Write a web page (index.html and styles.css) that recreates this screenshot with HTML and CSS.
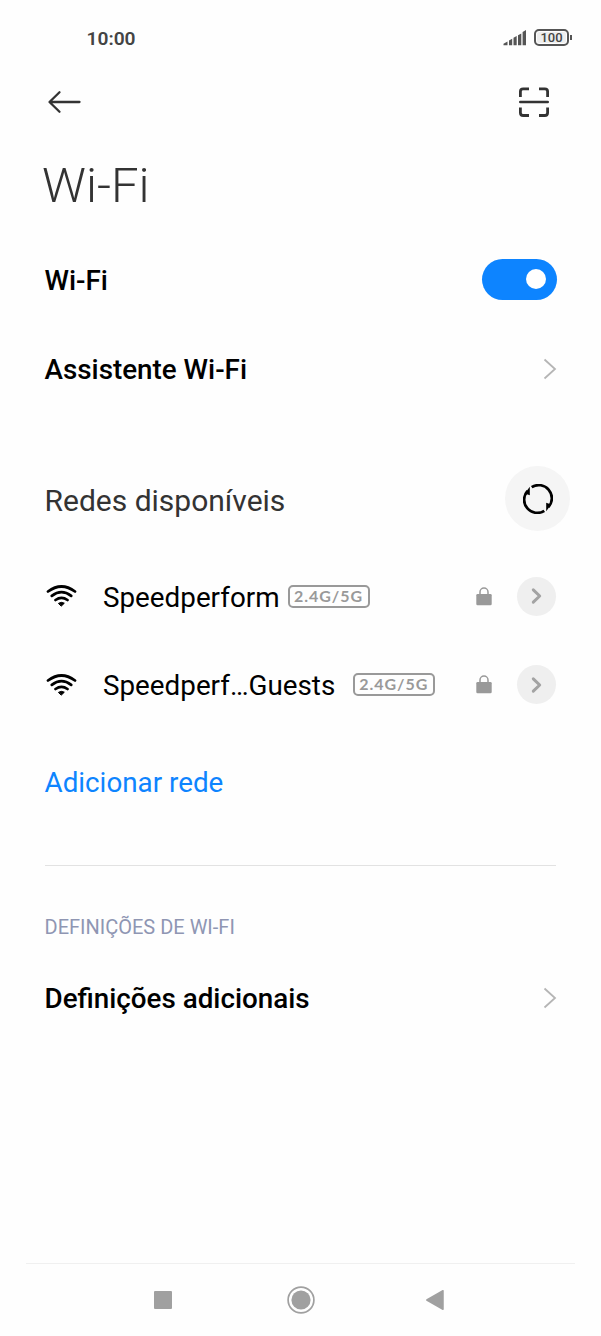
FILE: index.html
```html
<!DOCTYPE html>
<html lang="pt">
<head>
<meta charset="utf-8">
<title>Wi-Fi</title>
<link rel="stylesheet" href="styles.css">
</head>
<body>
<div class="screen">
  <header class="status">
    <span class="clock">10:00</span>
    <div class="indicators">
      <svg class="signal" width="24" height="17" viewBox="0 0 24 17" fill="#555"><path d="M0.5 16.3v-1.600l4-2.200v3.800zM6 16.300v-4.900l3.200-1.700v6.600zM10.500 16.300V8.800l3.200-1.700v9.200zM15 16.300V6.200l3.300-1.800v11.900zM19.600 16.300V3.100L23 .9v15.400z"/></svg>
      <span class="battery">100</span>
    </div>
  </header>
  <div class="appbar">
    <svg width="34" height="24" viewBox="0 0 34 24" fill="none" stroke="#333" stroke-width="2.3" stroke-linecap="round" stroke-linejoin="round"><path d="M32.500 12H2.800M12.500 2.200L2.500 12l10 9.800"/></svg>
    <svg width="32" height="32" viewBox="0 0 32 32" fill="none" stroke="#333" stroke-width="2.800"><path d="M2.400 11V5.600Q2.400 2.800 5.200 2.800H11M21 2.800h5.800q2.800 0 2.800 2.800V11M29.600 21.500v5.200q0 2.800-2.800 2.800H21M11 29.500H5.200q-2.800 0-2.800-2.800v-5.200"/><path d="M2.300 16h27.400" stroke-linecap="round" stroke-width="2.600"/></svg>
  </div>
  <h1 class="title">Wi-Fi</h1>
  <div class="row">
    <span class="strong">Wi-Fi</span>
    <span class="toggle"><span class="knob"></span></span>
  </div>
  <div class="row">
    <span class="strong">Assistente Wi-Fi</span>
    <svg class="chevron" width="14" height="22" viewBox="0 0 14 22"><path d="M1.500 1.500L12 11 1.500 20.500"/></svg>
  </div>
  <div class="row section">
    <span class="heading">Redes disponíveis</span>
    <span class="refresh">
      <svg width="30" height="30" viewBox="0 0 30 30"><path d="M8.700 3.200A13.100 13.100 0 0 1 25.500 23M21.300 26.800A13.100 13.100 0 0 1 4.500 7" fill="none" stroke="#000" stroke-width="2.700"/><path d="M6.800 2.800V11.300L1.800 9.500zM23.200 27.200V18.700l5 1.800z"/></svg>
    </span>
  </div>
  <div class="row network">
    <svg class="wifi" width="32" height="24" viewBox="0 0 32 24"><path d="M3 7.500Q16.500-2.500 30 7.500M6.800 11.900q9.700-7.500 19.400 0M10.500 16q6-4.200 12 0"/><path class="dot" d="M13.700 19.200q2.800-1.800 5.600 0l-2.800 2.700z"/></svg>
    <span class="name">Speedperform</span>
    <span class="band">2.4G/5G</span>
    <svg class="lock" width="16" height="19" viewBox="0 0 16 19"><path d="M4 8V5a4 4 0 0 1 8 0v3" fill="none" stroke="#999" stroke-width="1.500"/><rect x=".3" y="7" width="15.400" height="11.300" rx="1.300" fill="#999"/></svg>
    <span class="more"><svg width="12" height="18" viewBox="0 0 12 18"><path d="M3.300 2.800L9.700 9l-6.400 6.200"/></svg></span>
  </div>
  <div class="row network">
    <svg class="wifi" width="32" height="24" viewBox="0 0 32 24"><path d="M3 7.500Q16.500-2.500 30 7.500M6.800 11.900q9.700-7.500 19.400 0M10.500 16q6-4.200 12 0"/><path class="dot" d="M13.700 19.200q2.800-1.800 5.600 0l-2.800 2.700z"/></svg>
    <span class="name">Speedperf…Guests</span>
    <span class="band spaced">2.4G/5G</span>
    <svg class="lock" width="16" height="19" viewBox="0 0 16 19"><path d="M4 8V5a4 4 0 0 1 8 0v3" fill="none" stroke="#999" stroke-width="1.500"/><rect x=".3" y="7" width="15.400" height="11.300" rx="1.300" fill="#999"/></svg>
    <span class="more"><svg width="12" height="18" viewBox="0 0 12 18"><path d="M3.300 2.800L9.700 9l-6.400 6.200"/></svg></span>
  </div>
  <div class="row add">Adicionar rede</div>
  <div class="divider"></div>
  <h2 class="label">DEFINIÇÕES DE WI-FI</h2>
  <div class="row last">
    <span class="strong">Definições adicionais</span>
    <svg class="chevron" width="14" height="22" viewBox="0 0 14 22"><path d="M1.500 1.500L12 11 1.500 20.500"/></svg>
  </div>
  <nav class="navbar">
    <svg width="20" height="20" viewBox="0 0 20 20"><rect x="1" y="1" width="18" height="18" rx="1" fill="#a0a0a0"/></svg>
    <svg width="28" height="28" viewBox="0 0 28 28"><circle cx="14" cy="14" r="12.900" fill="none" stroke="#a0a0a0" stroke-width="1.700"/><circle cx="14" cy="14" r="9.600" fill="#a0a0a0"/></svg>
    <svg width="20" height="22" viewBox="0 0 20 22"><path d="M1.800 11L18 1.700v18.600z" fill="#a0a0a0" stroke="#a0a0a0" stroke-width="1.500" stroke-linejoin="round"/></svg>
  </nav>
</div>
</body>
</html>
```
FILE: styles.css
```css
* { box-sizing: border-box; }
body { margin: 0; background: #fefefe; font-family: Roboto, sans-serif; color: #000; }
svg { display: block; flex: none; }
.screen { width: 601px; height: 1336px; display: flex; flex-direction: column; overflow: hidden; }
.status { height: 75px; padding: 0 29px 0 86.5px; display: flex; align-items: center; justify-content: space-between; }
.clock { font-size: 19.2px; font-weight: 600; color: #444; padding-top: 1px; }
.indicators { display: flex; align-items: center; gap: 7px; }
.battery { position: relative; width: 35px; height: 17px; margin-right: 3px; border: 2px solid #555; border-radius: 5px; background: #eee; box-shadow: inset 0 0 0 1px #fefefe; font-size: 13px; line-height: 14px; font-weight: 500; text-align: center; color: #444; }
.battery::after { content: ""; position: absolute; right: -5px; top: 4px; width: 2px; height: 5px; background: #555; }
.appbar { height: 54px; padding: 0 51px 0 47px; display: flex; align-items: center; justify-content: space-between; }
.title { height: 106px; margin: 0; padding: 28px 0 0 42px; font-size: 49px; line-height: 58px; font-weight: 300; color: #333; }
.row { height: 89px; padding: 0 44.5px; display: flex; align-items: center; justify-content: space-between; flex: none; font-size: 27.8px; }
.strong { font-weight: 500; padding-top: 2px; }
.toggle { width: 75px; height: 41px; border-radius: 21px; background: #0d84ff; display: flex; align-items: center; justify-content: flex-end; padding-right: 11px; margin-bottom: 1px; }
.knob { width: 20px; height: 20px; border-radius: 50%; background: #fff; }
.chevron { fill: none; stroke: #b5b5b5; stroke-width: 1.8; }
.section { margin-top: 41px; padding-right: 31px; color: #333; font-size: 30px; }
.heading { padding-top: 3px; }
.refresh { width: 65px; height: 65px; border-radius: 50%; background: #f5f5f5; display: flex; align-items: center; justify-content: center; }
.section + .network { margin-top: 9px; }
.network { height: 88.5px; justify-content: flex-start; padding: 0 45.5px 0 45px; }
.wifi { fill: none; stroke: #000; stroke-width: 2.7; stroke-linecap: round; margin-right: 26px; }
.wifi .dot { fill: #000; stroke-width: 1; }
.name { padding-top: 2px; }
.band { width: 82px; height: 23px; margin-left: 8px; border: 2px solid #999; border-radius: 5px; color: #999; font: 700 16px/18px Lato, sans-serif; letter-spacing: 1px; text-align: center; white-space: nowrap; }
.spaced { margin-left: 17.5px; }
.lock { margin-left: auto; margin-right: 24.5px; }
.more { width: 39px; height: 39px; border-radius: 50%; background: #efefef; display: flex; align-items: center; justify-content: center; }
.more path { fill: none; stroke: #a3a3a3; stroke-width: 3; stroke-linecap: round; stroke-linejoin: round; }
.add { margin-top: 8px; padding-top: 1px; color: #0d84ff; }
.divider { height: 1px; margin: 39px 45px 0; background: #e2e2e2; flex: none; }
.label { height: 44px; margin: 39px 44.5px 4px; font-size: 20px; line-height: 44px; font-weight: 400; color: #8f96b3; }
.navbar { height: 73px; margin: auto 26px 0; padding: 0 130px 0 127px; border-top: 1px solid #f0f0f0; display: grid; grid-template-columns: 20px 1fr 20px; align-items: center; justify-items: center; }
.navbar svg:nth-child(2) { margin-left: 3px; }
```
